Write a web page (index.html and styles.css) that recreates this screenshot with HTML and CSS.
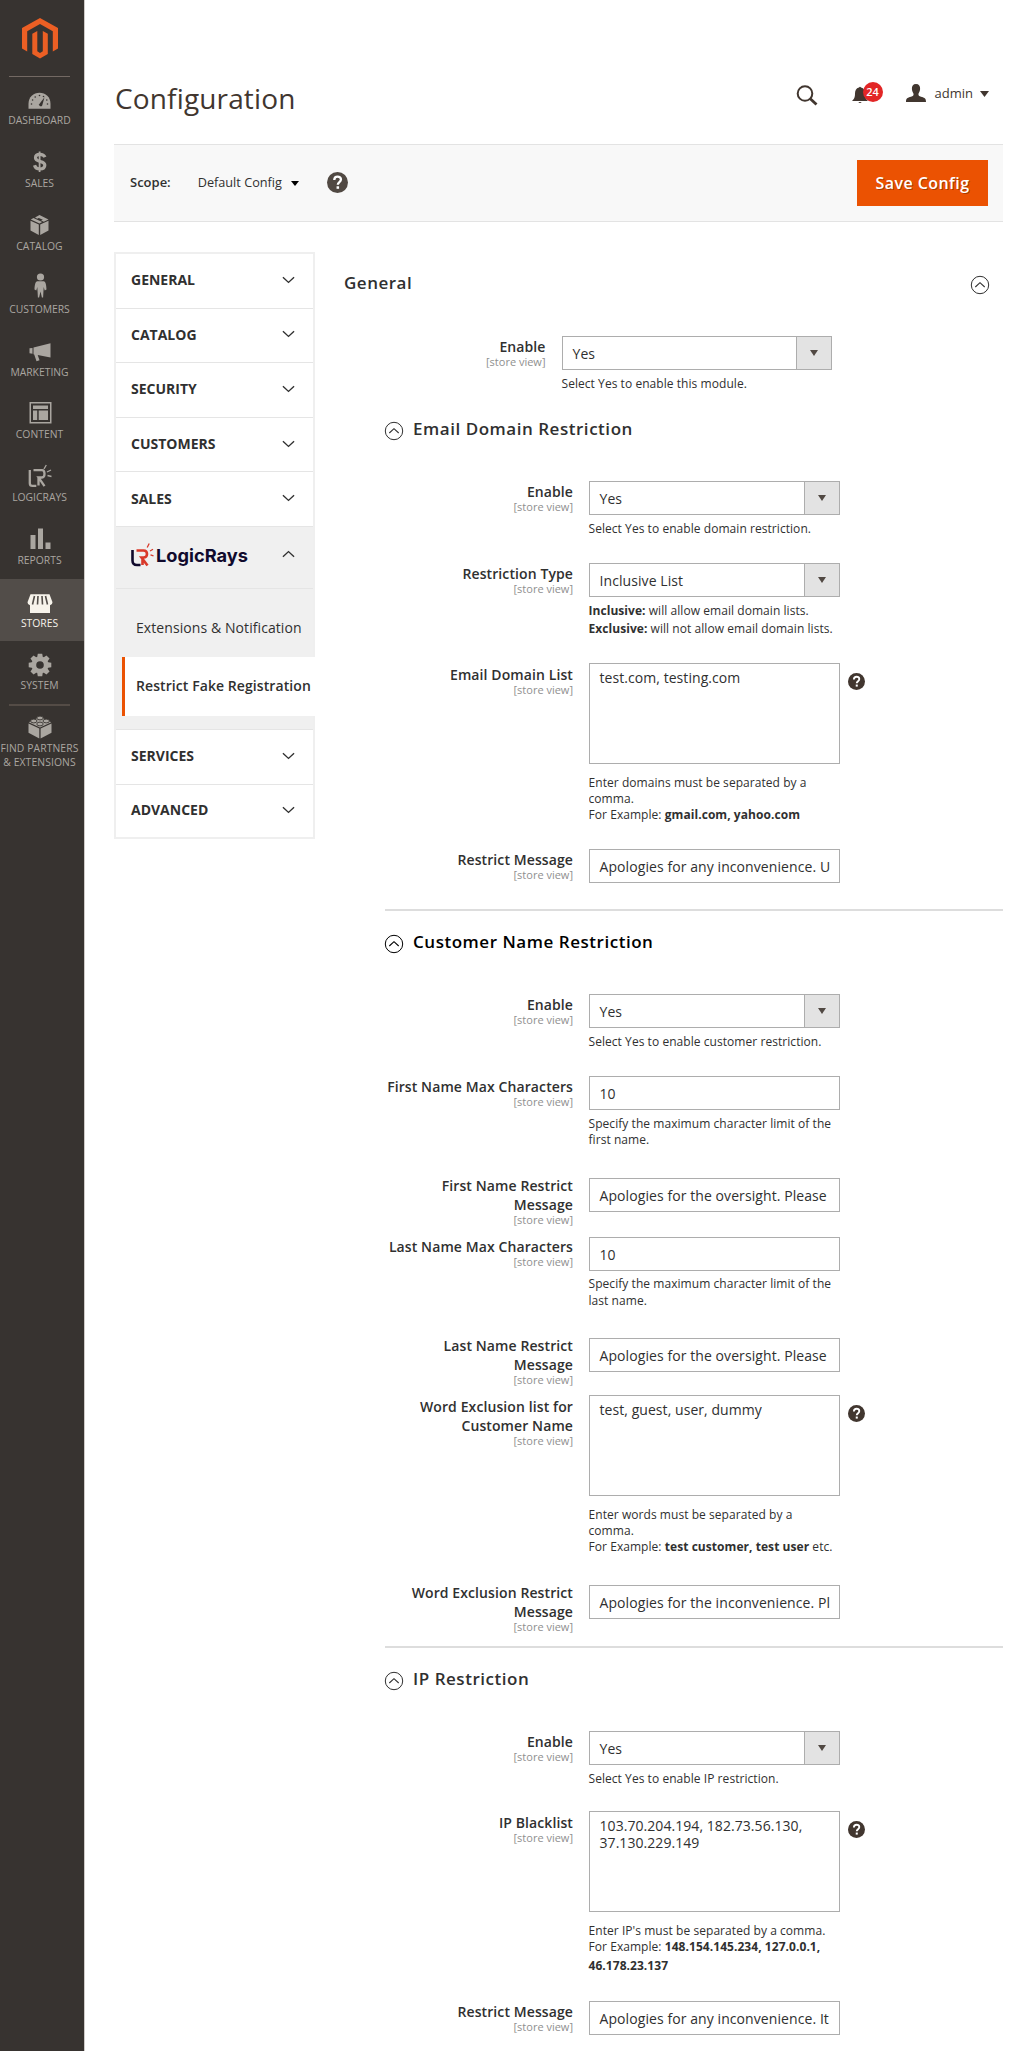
FILE: index.html
```html
<!DOCTYPE html>
<html lang="en">
<head>
<meta charset="utf-8">
<title>Configuration</title>
<link rel="stylesheet" href="styles.css">
</head>
<body>
<svg class="defs" width="0" height="0" aria-hidden="true">
  <symbol id="chev" viewBox="0 0 14 8"><path d="M1 1l6 5.6L13 1" fill="none" stroke="currentColor" stroke-width="1.5"/></symbol>
  <symbol id="toggle" viewBox="0 0 20 20"><circle cx="10" cy="10" r="8.7" fill="none" stroke="currentColor" stroke-width="1"/><path d="M5.3 12L10 7.7l4.7 4.3" fill="none" stroke="currentColor" stroke-width="1.1"/></symbol>
  <symbol id="help" viewBox="0 0 20 20"><circle cx="10" cy="10" r="10" fill="currentColor"/><path d="M6.9 7.6C7 5.4 8.3 4.4 10.1 4.4c1.9 0 3.2 1 3.2 2.7 0 2.6-3 2.4-3 5" fill="none" stroke="#fff" stroke-width="2.2"/><rect x="9.1" y="13.6" width="2.4" height="2.4" fill="#fff"/></symbol>
  <symbol id="tri" viewBox="0 0 8 6"><path d="M0 0h8L4 6z" fill="currentColor"/></symbol>
</svg>
<div class="app">
  <aside class="sidebar">
    <div class="logo"><svg width="36" height="41" viewBox="0 0 36 41" fill="#ec5f24"><path d="M18 0l18 10v20.500l-5.200 3V13.200L18 6 5.200 13.200v20.300L0 30.500V10z"/><path d="M10.300 15.800l5-2.800v20.300l2.700 1.700 2.800-1.700V13l5 2.800v20.100L18 40.500l-7.700-4.600z"/></svg></div>
    <nav class="menu">
      <a class="item"><svg viewBox="0 0 30 30"><path d="M3.500 24.700v-5C3.500 13 8.500 8.700 14.500 8.700s11 4.300 11 11v5z" fill="currentColor"/><g fill="#373330"><circle cx="6.500" cy="20" r=".8"/><circle cx="7.600" cy="16" r=".8"/><circle cx="10.200" cy="13" r=".8"/><circle cx="14.500" cy="11.500" r=".8"/><circle cx="18.500" cy="12.500" r=".8"/><circle cx="22.500" cy="20" r=".8"/><circle cx="21.800" cy="16" r=".8"/><path d="M19.500 13.200l-2.300 8.200c-.7 1.600-3.400.9-3-1.200z"/></g></svg><span>DASHBOARD</span></a>
      <a class="item"><svg viewBox="0 0 30 30" fill="none" stroke="currentColor"><path d="M20 10.200C19 8 17.400 7.300 14.900 7.300c-2.700 0-4.400 1.300-4.400 3.500 0 5 9.300 2.400 9.300 7.300 0 2.500-2.100 3.900-4.900 3.900-2.900 0-4.700-1.300-5.400-3.700" stroke-width="3.200"/><path d="M14.600 4.500v20.500" stroke-width="1.800"/></svg><span>SALES</span></a>
      <a class="item"><svg viewBox="0 0 30 30" fill="currentColor"><path d="M5.500 10.800l8.300 3.800V25l-8.300-4.600zM15.200 14.600l8.300-3.800v9.600L15.200 25zM5.800 9.500l2.700-1.400 8.700 4-2.700 1.400zM10 7.400l4.500-2.400 9 4.500-4.700 2.300-2.700-1.200 1.700-.9-4-1.800-1.600.9z"/></svg><span>CATALOG</span></a>
      <a class="item"><svg viewBox="0 0 30 30" fill="currentColor"><circle cx="15.500" cy="4" r="3.600"/><path d="M12.300 8.300h6.400c2 0 2.600 3.700 2.800 8.200l-1.800 1-1-3.500-.6 10.500h-1.200l-1.400-6-1.400 6h-1.200L12.300 14l-1 3.500-1.800-1c.2-4.500.8-8.200 2.800-8.200z"/></svg><span>CUSTOMERS</span></a>
      <a class="item"><svg viewBox="0 0 30 30" fill="currentColor"><path d="M4.500 12.300l3-.4v5.800l-3-.4zM8.500 11.500l17-4.200v14.300l-12.800-2.600 1.800 5.300-3 1-2.300-6.800-.7-.2z"/></svg><span>MARKETING</span></a>
      <a class="item"><svg viewBox="0 0 30 30" fill="currentColor"><path d="M4.500 4h22v21.500h-22zM6 5.500v18.500h19V5.500z" fill-rule="evenodd"/><path d="M8 7.500h15v3.600H8zM8 12.500h4.200V22H8zM13.700 12.500H23V22h-9.300z"/></svg><span>CONTENT</span></a>
      <a class="item"><svg viewBox="0 0 30 30" fill="none" stroke="currentColor" stroke-width="2.300"><path d="M4.800 9v13.200q0 2.700 2.700 2.700h3.800M8.500 9.200h8.500q2.500 0 2.500 3.600t-2.500 3.700h-3.500l6 8.700M13.500 16.500v8"/><path d="M19 8l2.300-4M22 11l4-2M22.500 14.500l4 1" stroke-width="1.300"/></svg><span>LOGICRAYS</span></a>
      <a class="item"><svg viewBox="0 0 30 30" fill="currentColor"><path d="M5.500 11h5v14h-5zM13 4.500h5V25h-5zM20.500 18.500h5V25h-5z"/></svg><span>REPORTS</span></a>
      <a class="item active"><svg viewBox="0 0 30 30" fill="currentColor"><path d="M5.500 7.300h19l3 8q0 2.700-2.500 3v7.700h-20v-7.700q-2.500-.3-2.500-3z"/><path d="M9.500 9L7.500 17.500M13 9l-.5 8.500M17 9l.5 8.500M20.500 9l2 8.500" stroke="#524d49" stroke-width="1.600"/></svg><span>STORES</span></a>
      <a class="item"><svg viewBox="0 0 30 30"><g fill="currentColor"><circle cx="15" cy="16" r="8.500"/><path d="M12.800 4.700h4.400l.8 4.500v13.600l-.8 4.500h-4.400l-.8-4.500V9.200z"/><path d="M12.800 4.700h4.400l.8 4.500v13.600l-.8 4.500h-4.400l-.8-4.500V9.200z" transform="rotate(45 15 16)"/><path d="M12.800 4.700h4.400l.8 4.500v13.600l-.8 4.500h-4.400l-.8-4.500V9.200z" transform="rotate(90 15 16)"/><path d="M12.800 4.700h4.400l.8 4.500v13.600l-.8 4.500h-4.400l-.8-4.500V9.200z" transform="rotate(135 15 16)"/></g><circle cx="15" cy="16" r="3.800" fill="#373330"/></svg><span>SYSTEM</span></a>
      <a class="item partners"><svg viewBox="0 0 30 30" fill="currentColor"><path d="M3.500 11.500l10.800 5V26.500L3.500 20.800zM15.600 16.500l10.900-5v9.300l-10.900 5.700z"/><path d="M3.800 10.200L15 4.700l11.200 5.500L15 15.500z"/><g stroke="#373330" stroke-width=".9"><ellipse cx="15" cy="6" rx="3.200" ry="1.900"/><ellipse cx="8.800" cy="9" rx="3.200" ry="1.900"/><ellipse cx="21.200" cy="9" rx="3.200" ry="1.900"/><ellipse cx="15" cy="12" rx="3.200" ry="1.900"/></g></svg><span>FIND PARTNERS<br>&amp; EXTENSIONS</span></a>
    </nav>
  </aside>

  <main class="page">
    <header class="header">
      <h1>Configuration</h1>
      <div class="tools">
        <svg class="search" width="22" height="21" viewBox="0 0 22 21" fill="none" stroke="#41362f"><circle cx="9" cy="8.500" r="7.300" stroke-width="2"/><path d="M14 13.500l6.500 6" stroke-width="2.800"/></svg>
        <div class="bell"><svg width="18" height="18" viewBox="0 0 18 18" fill="#41362f"><path d="M7 1.500q1-1.500 2 0c3 .8 4 3 4 6 0 4 .8 5.500 3 7.500H0c2.200-2 3-3.500 3-7.500 0-3 1-5.200 4-6zM6.300 16h3.400q-1.700 2-3.400 0z"/></svg><b>24</b></div>
        <svg class="user" width="20" height="18" viewBox="0 0 20 18" fill="#41362f"><path d="M10 0c3 0 4.300 2 4.100 5-.2 2.600-1.300 3.700-1.700 5 0 2 1 2.200 3.600 3 2.700.8 4 1.500 4 5H0c0-3.500 1.300-4.200 4-5 2.600-.8 3.600-1 3.600-3-.4-1.300-1.500-2.400-1.700-5C5.700 2 7 0 10 0z"/></svg>
        <span class="admin">admin</span><svg class="tri" width="9" height="6" viewBox="0 0 9 6"><path d="M0 0h9L4.500 6z" fill="currentColor"/></svg>
      </div>
    </header>

    <div class="scope">
      <b>Scope:</b><span class="store">Default Config</span><svg class="tri" width="8" height="5" viewBox="0 0 8 5"><path d="M0 0h8L4 5z" fill="currentColor"/></svg>
      <svg class="help" width="21" height="21"><use href="#help"/></svg>
      <button class="save">Save Config</button>
    </div>

    <div class="columns">
      <nav class="tabs">
        <div class="tab">GENERAL<svg><use href="#chev"/></svg></div>
        <div class="tab">CATALOG<svg><use href="#chev"/></svg></div>
        <div class="tab">SECURITY<svg><use href="#chev"/></svg></div>
        <div class="tab">CUSTOMERS<svg><use href="#chev"/></svg></div>
        <div class="tab">SALES<svg><use href="#chev"/></svg></div>
        <div class="tab open"><svg class="brand" width="118" height="28" viewBox="0 0 118 28"><g fill="none" stroke-width="2.600"><path d="M1.500 7v10.500q0 4.500 4.500 4.500h3.500" stroke="#100a2d"/><path d="M5.500 7.500h7q3.500 0 3.500 3.500t-3.500 3.500h-2l6 8M11.500 14.500v7.500" stroke="#d93a2b"/><path d="M16.200 4.500l2-4M19 8l3-1.700M19.500 11.800l3 1" stroke="#d93a2b" stroke-width="1.300"/></g><text x="25" y="19" textLength="92" lengthAdjust="spacingAndGlyphs">LogicRays</text></svg><svg class="up"><use href="#chev"/></svg></div>
        <div class="sub">
          <a>Extensions &amp; Notification</a>
          <a class="current">Restrict Fake Registration</a>
        </div>
        <div class="tab">SERVICES<svg><use href="#chev"/></svg></div>
        <div class="tab last">ADVANCED<svg><use href="#chev"/></svg></div>
      </nav>

      <div class="content">
        <div class="group-head"><h2>General</h2><svg width="20" height="20"><use href="#toggle"/></svg></div>
        <div class="row general">
          <label>Enable<small>[store view]</small></label>
          <div class="control"><div class="select"><span>Yes</span><i><svg width="8" height="6"><use href="#tri"/></svg></i></div><p class="note">Select Yes to enable this module.</p></div>
        </div>

        <section class="block first">
          <h3><svg width="20" height="20"><use href="#toggle"/></svg>Email Domain Restriction</h3>
          <div class="row h82"><label>Enable<small>[store view]</small></label>
            <div class="control"><div class="select"><span>Yes</span><i><svg width="8" height="6"><use href="#tri"/></svg></i></div><p class="note">Select Yes to enable domain restriction.</p></div></div>
          <div class="row h100"><label>Restriction Type<small>[store view]</small></label>
            <div class="control"><div class="select"><span>Inclusive List</span><i><svg width="8" height="6"><use href="#tri"/></svg></i></div><p class="note loose"><b>Inclusive:</b> will allow email domain lists.<br><b>Exclusive:</b> will not allow email domain lists.</p></div></div>
          <div class="row h186"><label class="low">Email Domain List<small>[store view]</small></label>
            <div class="control"><div class="area">test.com, testing.com</div><p class="note area-note clip">Enter domains must be separated by a<br>comma.<br>For Example: <b>gmail.com, yahoo.com</b></p></div>
            <svg class="tip" width="17" height="17"><use href="#help"/></svg></div>
          <div class="row h60"><label>Restrict Message<small>[store view]</small></label>
            <div class="control"><div class="input"><span>Apologies for any inconvenience. U</span></div></div></div>
        </section>

        <section class="block dark">
          <h3><svg width="20" height="20"><use href="#toggle"/></svg>Customer Name Restriction</h3>
          <div class="row h82"><label>Enable<small>[store view]</small></label>
            <div class="control"><div class="select"><span>Yes</span><i><svg width="8" height="6"><use href="#tri"/></svg></i></div><p class="note">Select Yes to enable customer restriction.</p></div></div>
          <div class="row h102"><label>First Name Max Characters<small>[store view]</small></label>
            <div class="control"><div class="input"><span>10</span></div><p class="note">Specify the maximum character limit of the<br>first name.</p></div></div>
          <div class="row h59"><label class="two">First Name Restrict<br>Message<small>[store view]</small></label>
            <div class="control"><div class="input"><span>Apologies for the oversight. Please</span></div></div></div>
          <div class="row h101"><label>Last Name Max Characters<small>[store view]</small></label>
            <div class="control"><div class="input"><span>10</span></div><p class="note">Specify the maximum character limit of the<br>last name.</p></div></div>
          <div class="row h57"><label class="two">Last Name Restrict<br>Message<small>[store view]</small></label>
            <div class="control"><div class="input"><span>Apologies for the oversight. Please</span></div></div></div>
          <div class="row h190"><label class="low">Word Exclusion list for<br>Customer Name<small>[store view]</small></label>
            <div class="control"><div class="area">test, guest, user, dummy</div><p class="note area-note">Enter words must be separated by a<br>comma.<br>For Example: <b>test customer, test user</b> etc.</p></div>
            <svg class="tip" width="17" height="17"><use href="#help"/></svg></div>
          <div class="row h61"><label class="two">Word Exclusion Restrict<br>Message<small>[store view]</small></label>
            <div class="control"><div class="input"><span>Apologies for the inconvenience. Pl</span></div></div></div>
        </section>

        <section class="block">
          <h3><svg width="20" height="20"><use href="#toggle"/></svg>IP Restriction</h3>
          <div class="row h80"><label>Enable<small>[store view]</small></label>
            <div class="control"><div class="select"><span>Yes</span><i><svg width="8" height="6"><use href="#tri"/></svg></i></div><p class="note">Select Yes to enable IP restriction.</p></div></div>
          <div class="row h190"><label class="low">IP Blacklist<small>[store view]</small></label>
            <div class="control"><div class="area">103.70.204.194, 182.73.56.130,<br>37.130.229.149</div><p class="note area-note">Enter IP's must be separated by a comma.<br>For Example: <b>148.154.145.234, 127.0.0.1,<br><span class="lower">46.178.23.137</span></b></p></div>
            <svg class="tip" width="17" height="17"><use href="#help"/></svg></div>
          <div class="row h50"><label>Restrict Message<small>[store view]</small></label>
            <div class="control"><div class="input"><span>Apologies for any inconvenience. It</span></div></div></div>
        </section>
      </div>
    </div>
  </main>
</div>
</body>
</html>
```
FILE: styles.css
```css
* { box-sizing: border-box; }
body { margin: 0; background: #fff; color: #303030; font: 14px/19px "Open Sans", "Noto Sans", sans-serif; }
.defs { display: block; }
h1, h2, h3, p { margin: 0; }
svg { display: block; flex: none; }
.app { display: flex; height: 2051px; overflow: hidden; }

/* main menu */
.sidebar { width: 85px; flex: none; background: #373330; border-right: 1px solid #cfcbc8; }
.logo { height: 77px; margin: 0 14px 0 9px; padding: 18px 0 0 13px; border-bottom: 1px solid #736963; }
.menu { margin-top: -.7px; color: #aaa6a0; }
.item { display: block; height: 62.800px; padding-top: 8px; font-size: 10.350px; line-height: 12px; text-align: center; }
.item svg { width: 30px; height: 30px; margin: 0 auto 0 24.500px; }
.item span { display: block; width: 79px; white-space: nowrap; }
.item.active { background: #524d49; color: #f7f3eb; }
.item.partners { line-height: 14px; }
.partners span { margin-top: -1px; letter-spacing: .1px; }
.partners::before { content: ""; display: block; height: 2px; width: 61px; margin: -8px 0 6px 9px; background: #544c46; }

/* page header */
.page { width: 889px; margin-left: 29px; }
.header { display: flex; justify-content: space-between; height: 144px; }
h1 { font-size: 28px; line-height: 38px; font-weight: 400; color: #41362f; padding: 79px 0 0 1px; letter-spacing: .15px; }
.tools { display: flex; align-items: flex-start; padding: 84px 14px 0 0; }
.search { margin-top: 1px; }
.bell { display: flex; align-items: flex-start; width: 32px; margin: 0 22px 0 34px; padding-top: 2px; position: relative; }
.bell b { position: absolute; left: 11px; top: -2px; width: 20px; height: 20px; border-radius: 50%; background: #e22626; color: #fff; font-size: 11px; line-height: 20px; font-weight: 600; text-align: center; }
.admin { font-size: 13px; line-height: 20px; margin: -1px 7px 0 9px; color: #41362f; }
.tools .tri { margin-top: 7px; color: #41362f; }

.scope { display: flex; align-items: center; height: 78px; background: #f8f8f8; border: solid #e3e3e3; border-width: 1px 0; padding: 0 15px 0 16px; font-size: 12.700px; }
.scope b { font-weight: 600; font-size: 13px; margin-top: -2px; }
.store { margin: -2px 9px 0 27px; }
.scope .tri { color: #000; }
.help { margin-left: 28px; color: #514943; margin-top: -1px; }
.save { margin-left: auto; width: 131px; height: 46px; padding: 0; border: 1px solid #eb5202; background: #eb5202; color: #fff; font: 600 16px/44px "Open Sans", sans-serif; letter-spacing: .45px; text-shadow: 1px 1px 0 rgba(0,0,0,.3); }

/* section tabs */
.columns { display: flex; }
.tabs { width: 201px; flex: none; margin-top: 30px; border: 2px solid #efefef; align-self: flex-start; }
.tab { display: flex; align-items: center; justify-content: space-between; height: 54.600px; padding: 0 18px 2px 15px; border-bottom: 1px solid #e5e5e5; font-weight: 700; font-size: 14px; }
.tab > svg:last-child { width: 13px; height: 8px; }
.tab .up { transform: rotate(180deg); margin-top: -6px; }
.tab.last { height: 52px; border-bottom: 0; }
.tab.open { height: 62.500px; background: #f0f0f0; }
.brand { width: 118px; height: 28px; }
.brand text { font: 700 18px Inter, sans-serif; fill: #100a2d; }
.sub { height: 140.500px; padding: 9px 0 13px 7px; background: #f0f0f0; border-bottom: 1px solid #e5e5e5; }
.sub a { display: block; height: 59px; line-height: 59px; padding-left: 13px; font-size: 14px; white-space: nowrap; letter-spacing: .08px; }
.sub .current { margin: 0 -2px 0 -1px; padding-left: 11px; border-left: 3px solid #eb5202; background: #fff; font-weight: 600; letter-spacing: .08px; line-height: 58px; }

/* settings */
.content { width: 659px; margin-left: 29px; padding-top: 50px; }
.group-head { display: flex; justify-content: space-between; height: 64px; padding: 0 13px 0 0; }
h2 { font-size: 17px; line-height: 22px; font-weight: 600; letter-spacing: .5px; }
.group-head svg { margin-top: 3px; }
.row { display: flex; gap: 15.500px; height: 82px; }
.row label { flex: none; width: 188px; padding-top: .5px; text-align: right; font-weight: 600; line-height: 19px; white-space: nowrap; letter-spacing: .1px; }
.row label.two { padding-top: 0; margin-top: -2px; }
.row label.low { padding-top: 2px; }
.row small { display: block; font-size: 11px; line-height: 11px; font-weight: 400; color: #8f8f8f; letter-spacing: 0; }
.control { width: 251.500px; flex: none; }
.row.general { height: 60px; gap: 16px; }
.general label { width: 201.500px; }
.general .control { width: 270px; }
.select, .input { display: flex; height: 34px; border: 1px solid #adadad; line-height: 34px; padding-left: 10px; background: #fff; letter-spacing: .08px; }
.select span { flex: 1; }
.select i { width: 35px; display: flex; align-items: center; justify-content: center; background: #e3e3e3; border-left: 1px solid #adadad; color: #514943; }
.input { line-height: 33px; }
.input span { white-space: nowrap; }
.area { height: 101px; border: 1px solid #adadad; padding: 5px 10px; line-height: 17px; white-space: nowrap; letter-spacing: .06px; }
.note { padding-top: 5.500px; font-size: 12px; line-height: 16.800px; white-space: nowrap; letter-spacing: .055px; }
.note b { font-weight: 700; }
.loose { padding-top: 4.500px; line-height: 18.800px; }
.area-note { padding-top: 11px; line-height: 16px; }
.clip { height: 59px; overflow: hidden; }
.lower { line-height: 22px; }
.tip { margin: 9.500px 0 0 -8px; color: #41362f; }

.block { margin-left: 41px; border-top: 2px solid #ddd; }
.block.first { border-color: transparent; }
h3 { display: flex; align-items: flex-start; gap: 9px; height: 83px; padding-top: 19.500px; font-size: 17px; line-height: 22px; font-weight: 600; letter-spacing: .53px; }
h3 svg { margin: 3px 0 0 -1px; }
.dark h3 { color: #000; }
.row.h100 { height: 100px; }
.row.h186 { height: 186px; }
.row.h60 { height: 60px; }
.row.h102 { height: 102px; }
.row.h59 { height: 58.500px; }
.row.h101 { height: 101.500px; }
.row.h57 { height: 57px; }
.row.h190 { height: 190px; }
.row.h61 { height: 61px; }
.row.h80 { height: 80px; }
.row.h50 { height: 50px; }
```
